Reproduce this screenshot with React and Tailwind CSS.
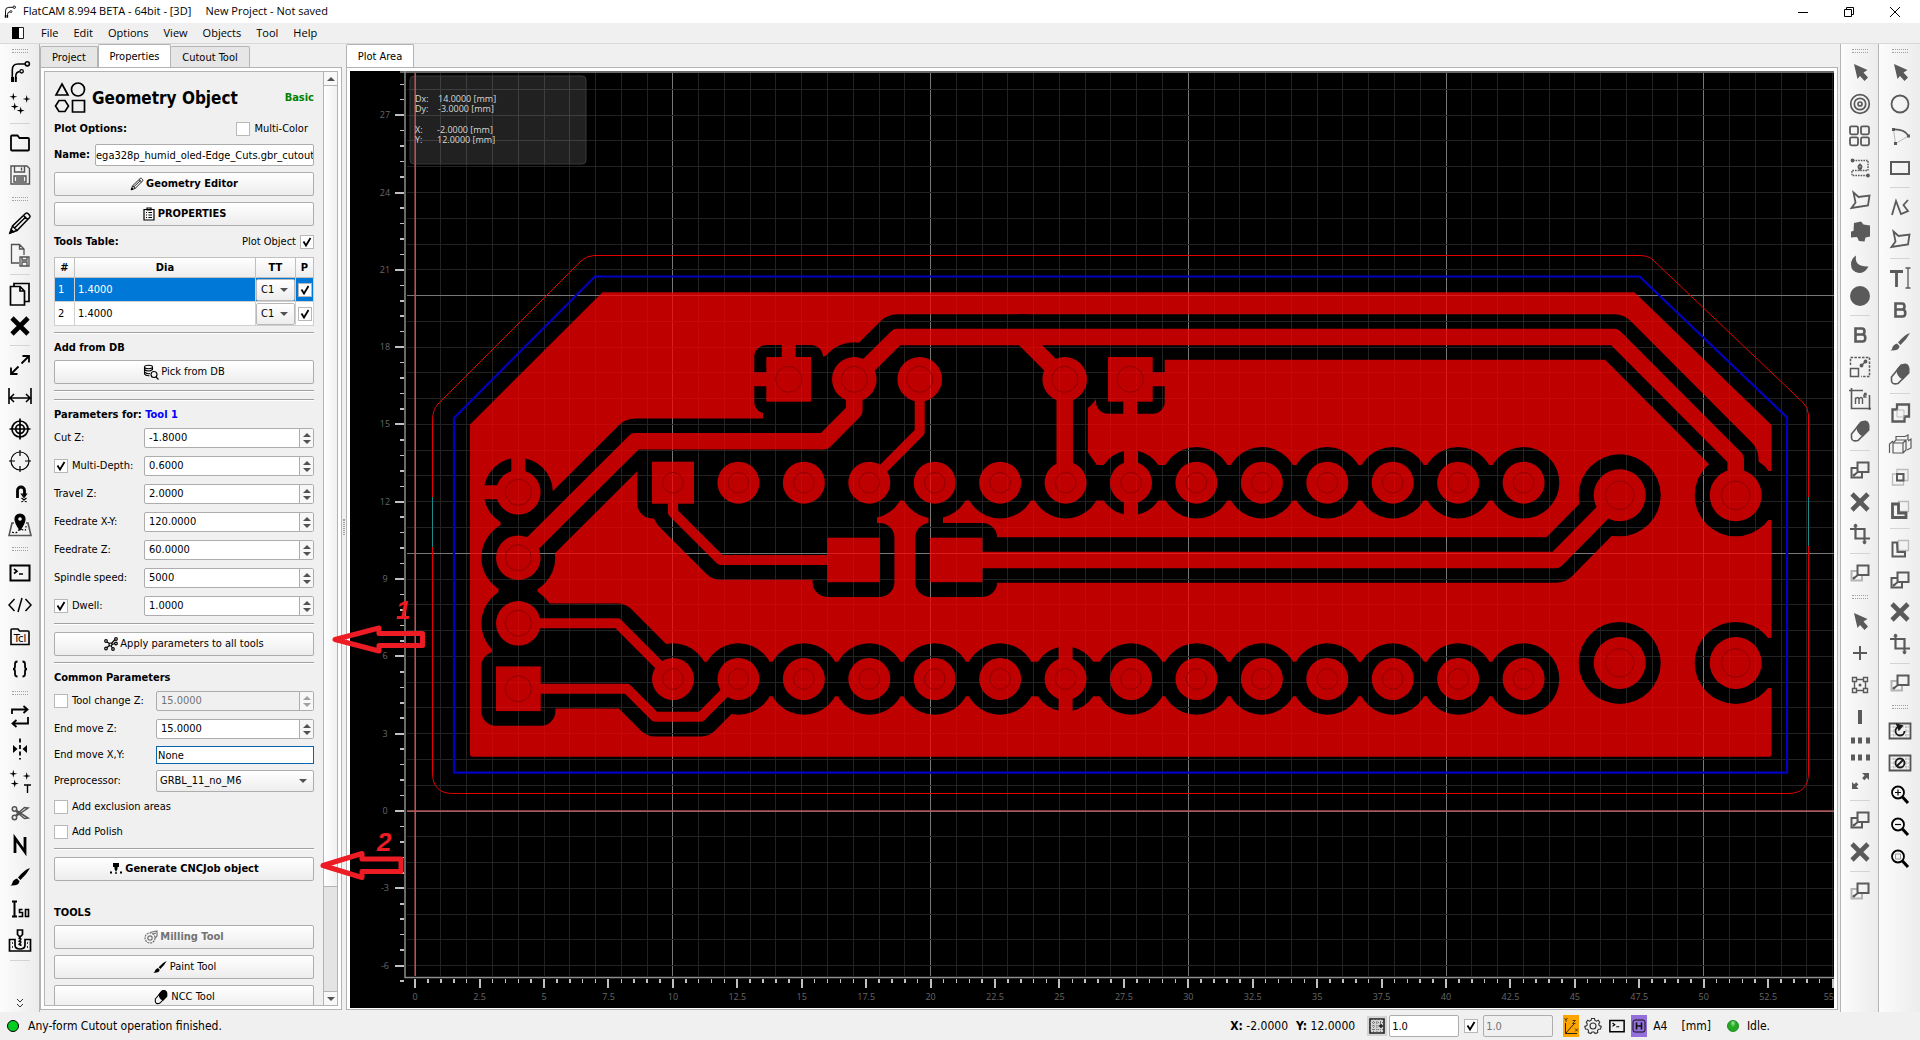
import clsx from 'clsx';

const PANEL_FONT = "font-['DejaVu_Sans_Condensed','DejaVu_Sans',sans-serif]";
const UI_FONT = "font-['Open_Sans','Noto_Sans',sans-serif]";

/* ---------- icons ---------- */

function Svg({ children, className = 'size-6', box = '0 0 24 24', ...rest }) {
  return (
    <svg viewBox={box} className={className} fill="none" stroke="currentColor" strokeWidth="1.6" aria-hidden="true" {...rest}>
      {children}
    </svg>
  );
}

const star = (x, y) => `M${x} ${y - 4}l.8 3.2 3.2.8-3.2.8-.8 3.2-.8-3.2-3.2-.8 3.2-.8z`;

const FlatcamIcon = ({ className }) => (
  <Svg className={className}>
    <path d="M4.3 18V10Q4.3 4 10 4h7M7.8 19v-3q0-4 4-4.5" />
    <circle cx="19.3" cy="3.8" r="2.1" />
    <circle cx="13.6" cy="11.3" r="1.7" strokeWidth="1.3" />
    <path d="M3 17h3v5H3zM6.8 17h2v5h-2z" fill="currentColor" stroke="none" />
  </Svg>
);
const Sparkles = ({ letter }) => (
  <Svg>
    <path d={star(5.3, 4.8) + star(18.7, 7) + star(6.7, 14.6) + (letter ? '' : star(12.7, 18.6))} fill="currentColor" stroke="none" />
    {letter && <path d="M16 16h7M19.5 16v8" strokeWidth="1.4" />}
  </Svg>
);
const FolderIcon = () => (
  <Svg strokeWidth="1.8">
    <path d="M3 19V5.5Q3 4.5 4 4.5h5.5L11.5 7H20q1 0 1 1v10.5q0 1-1 1H4q-1 0-1-1z" />
  </Svg>
);
const SaveIcon = () => (
  <Svg className="size-6 text-neutral-600" strokeWidth="1.4">
    <path d="M3 3h16l2.5 2.5V21H3zM6.5 3v6h10V3M13.5 4.5v3" />
    <path d="M6 13h12v6H6zM8 15h8M8 17h8" />
  </Svg>
);
const PencilIcon = ({ className }) => (
  <Svg className={className} strokeWidth="1.5">
    <path d="M2 22l2.5-7L17.5 2.5q1.2-1 2.4 0l1.7 1.7q1 1.2 0 2.4L9 19.5zM4.5 15L9 19.5M15.5 4.5L19.5 8.5M6.5 17L18 5.8" />
    <path d="M2 22l1.2-3.4 2.2 2.2z" fill="currentColor" />
  </Svg>
);
const DocSaveIcon = () => (
  <Svg className="size-6 text-neutral-600" strokeWidth="1.3">
    <path d="M11 20H3.5V1.5h8L16 6v6M11.5 1.5V6H16" />
    <path d="M12 14h9v9h-9zM14 14v3h5v-3M14 23v-4h5v4" />
  </Svg>
);
const CopyIcon = () => (
  <Svg strokeWidth="1.7">
    <path d="M2.5 4.5h9.5l4.5 4.5v14h-14zM12 4.5V9h4.5" />
    <path d="M6 4V1.5h15v18h-4" />
  </Svg>
);
const CrossIcon = () => (
  <Svg>
    <path d="M4 4l16 16M20 4L4 20" strokeWidth="4.6" />
  </Svg>
);
const ExpandIcon = ({ solid }) => (
  <Svg strokeWidth="1.8">
    {solid ? (
      <path d="M14 4h7v7l-2.2-2.2-2.5 2.5-2.2-2.2 2.5-2.5zM4 20v-7l2.2 2.2 2-2 2.2 2.2-2 2 2.2 2.6z" fill="currentColor" stroke="none" />
    ) : (
      <path d="M13.5 10.5l7-7M14.5 3h6.5v6.5M10.5 13.5l-7 7M3 14.5V21h6.5" />
    )}
  </Svg>
);
const DistanceIcon = () => (
  <Svg>
    <path d="M1 3v16M23 3v16M2 13h20M6 9l-4 4 4 4M18 9l4 4-4 4" />
  </Svg>
);
const TargetIcon = () => (
  <Svg strokeWidth="1.7">
    <circle cx="12" cy="12" r="8" />
    <circle cx="12" cy="12" r="4.3" />
    <path d="M12 1.5v21M1.5 12h21" />
  </Svg>
);
const CrosshairIcon = () => (
  <Svg strokeWidth="1.2">
    <circle cx="12" cy="12" r="9" />
    <path d="M12 1v6M12 17v6M1 12h6M17 12h6" />
  </Svg>
);
const SnapIcon = () => (
  <Svg>
    <path d="M9.5 17V9.500a3.5 3.5 0 0 1 7 0V15" strokeWidth="2.8" />
    <path d="M13.5 13h5l-2.5 3.5zM13.5 21l5-4M13.5 17l5 4" strokeWidth="1.2" />
  </Svg>
);
const MapIcon = () => (
  <Svg strokeWidth="1.2">
    <path d="M6 10H4L1 22.500h22L20 10h-2" stroke="#555" strokeWidth="1.6" />
    <path d="M4 19q4 2 6-1t5-1 3-4" strokeDasharray="2 1.5" />
    <path d="M12 17Q7 10 7 6a5 5 0 0 1 10 0q0 4-5 11z" fill="currentColor" />
    <circle cx="12" cy="6" r="1.8" fill="#f5f5f5" stroke="none" />
  </Svg>
);
const TerminalIcon = ({ className }) => (
  <Svg className={className} strokeWidth="2">
    <path d="M2.5 4.5h19v15h-19z" />
    <path d="M6 8l3 2.2L6 12.5M11 13h4" strokeWidth="1.6" />
  </Svg>
);
const CodeIcon = () => (
  <Svg strokeWidth="1.5">
    <path d="M6.5 6L1 12l5.5 6M17.5 6l5.5 6-5.5 6M14 5l-4 14" />
  </Svg>
);
const TclIcon = () => (
  <Svg strokeWidth="1.6">
    <path d="M3 19.5V5q0-1 1-1h6l1.5 2H20q1 0 1 1v12.5z" />
    <text x="12" y="16.5" textAnchor="middle" fontSize="10" fontFamily="DejaVu Sans, sans-serif" fill="currentColor" stroke="none">Tcl</text>
  </Svg>
);
const BracesIcon = () => (
  <Svg strokeWidth="1.8">
    <path d="M9.5 4.5Q7 4.5 7 7v2.5Q7 12 5 12q2 0 2 2.5V17q0 2.5 2.5 2.5M14.5 4.5Q17 4.5 17 7v2.5q0 2.5 2 2.5-2 0-2 2.5V17q0 2.5-2.5 2.5" />
  </Svg>
);
const LoopIcon = () => (
  <Svg strokeWidth="1.8">
    <path d="M4 9V4.5h15M15.5 1l4 3.5-4 3.5M20 12v6.5H5M8.5 15l-4 3.5 4 3.5" />
  </Svg>
);
const MirrorIcon = () => (
  <Svg>
    <path d="M12 1.5v21" strokeDasharray="4 2.5" strokeWidth="1.8" />
    <path d="M5 8v8l4.5-4zM19 8v8l-4.5-4z" fill="currentColor" stroke="none" />
  </Svg>
);
const ScissorsIcon = () => (
  <Svg className="size-6 text-neutral-600" strokeWidth="1.5">
    <circle cx="6.5" cy="8" r="2.2" />
    <circle cx="6.5" cy="16.5" r="2.2" />
    <path d="M8.5 9.5L20 17l-3.5.5L8 10.5M8.5 15L20 7l-3.5-.5L8 14" />
  </Svg>
);
const NIcon = () => (
  <Svg>
    <path d="M7 20V5l10 14V4" strokeWidth="2.8" />
  </Svg>
);
const BrushIcon = ({ className }) => (
  <Svg className={className}>
    <path d="M22 3q-6 2-12 9.5l2.5 2.5Q19 9 22 3zM9 13.5l2.5 2.5q0 5-9.5 4.5 2-.5 2.5-3T9 13.5z" fill="currentColor" stroke="none" />
  </Svg>
);
const IsoIcon = () => (
  <Svg>
    <path d="M4 4.5h5M6.5 4.5v15M4 19.5h5" strokeWidth="2" />
    <path d="M14.5 12.5h-3v3h3v4h-4M17.5 12.500h3v7h-3z" strokeWidth="1.6" />
  </Svg>
);
const DrillIcon = () => (
  <Svg strokeWidth="1.7">
    <path d="M1.5 10.5H7V16q0 4 5 4t5-4v-5.5h5.5V22h-21z" />
    <path d="M9.5 1h5v4.5L12 8 9.5 5.5zM12 7v10M10.5 9l3 1.5M10.5 12l3 1.5M10.5 15l3 1.5" />
    <path d="M4 14h1M4 18h1M19 14h1M19 18h1" />
  </Svg>
);

const ArrowIcon = () => (
  <Svg>
    <path d="M6 4l13.5 6-4 2.5 4.5 5-3.5 3.5-4.5-5L9.5 19z" fill="currentColor" stroke="none" />
  </Svg>
);
const ApertureIcon = () => (
  <Svg strokeWidth="1.7">
    <circle cx="12" cy="12" r="9.3" />
    <circle cx="12" cy="12" r="5.7" />
    <circle cx="12" cy="12" r="2" />
  </Svg>
);
const FourSquares = () => (
  <Svg strokeWidth="1.8">
    <rect x="2" y="2.3" width="8" height="8" rx="1.5" />
    <rect x="13" y="2.3" width="8" height="8" rx="1.5" />
    <rect x="2" y="13.3" width="8" height="8" rx="1.5" />
    <rect x="13" y="13.3" width="8" height="8" rx="1.5" />
  </Svg>
);
const TrackIcon = () => (
  <Svg strokeWidth="1.4">
    <path d="M5 4.5h15v10H4v5h16" strokeDasharray="1.6 1" />
    <circle cx="4.5" cy="4.5" r="1.2" fill="currentColor" />
    <circle cx="20" cy="19.5" r="1.2" fill="currentColor" />
    <path d="M12 13.5q-3-3 0-5 3 2 0 5z" strokeWidth="2" />
  </Svg>
);
const PolyIcon = () => (
  <Svg strokeWidth="1.8">
    <path d="M5.5 4.5l5 4.5 11-1.5-1.5 10L3.5 20l4-5.5z" />
  </Svg>
);
const BlobIcon = () => (
  <Svg>
    <path d="M6 3l7-1.5 2.5 3 6.5 1v11l-4.5 1-1 4-5.5-.5-2-4-6 .5v-6L5.500 11z" fill="currentColor" stroke="none" />
  </Svg>
);
const MoonIcon = () => (
  <Svg>
    <path d="M8 3.5Q6 15 20.5 14.5 17 21.500 11 21 3 20 3 12.5q0-6 5-9z" fill="currentColor" stroke="none" />
  </Svg>
);
const DiscIcon = () => (
  <Svg>
    <circle cx="12" cy="12" r="10" fill="currentColor" stroke="none" />
  </Svg>
);
const BoldIcon = () => (
  <Svg strokeWidth="2.6">
    <path d="M7.5 5.5H14q2.5 0 2.5 3t-2.5 3H7.5zM7.5 11.5h7q2.8 0 2.8 3.5t-2.8 3.5h-7z" />
  </Svg>
);
const ScaleIcon = () => (
  <Svg strokeWidth="1.5">
    <path d="M2.5 10V2.5h19v19H13" strokeDasharray="2.5 1.3" />
    <path d="M2.5 13.5h8v8h-8zM13 11l5-5" />
    <circle cx="13.5" cy="10.5" r="1.2" fill="currentColor" />
    <circle cx="17.5" cy="6.5" r="1.2" fill="currentColor" />
  </Svg>
);
const AreaIcon = () => (
  <Svg strokeWidth="1.6">
    <path d="M3.5 1v20.5H23M1 3.5h14M21.5 8v15" />
    <path d="M7.5 17v-6.5M7.5 12q2.5-3 3.5 0v5M11 12q2.5-3 3.5 0v5M16 6.5h2v1.5h-2v2h2.5" strokeWidth="1.4" />
  </Svg>
);
const EraserIcon = ({ className }) => (
  <Svg className={className} strokeWidth="1.6">
    <path d="M3.5 15L13 3.5q6-3 7.5 2.5v5L10 21.5Q4 23 3.5 19z" />
    <path d="M9.5 7.5L13 3.5q6-3 7.5 2.5v5L15 16.5Q9 14 9.5 7.5z" fill="currentColor" />
  </Svg>
);
const MoveCopyIcon = ({ faded }) => (
  <Svg strokeWidth="2">
    <path d="M9 10H3.5v9.5H14V15" stroke={faded ? '#b5b5b5' : 'currentColor'} />
    <path d="M9.5 4.5h11V14h-11zM5 18l6-5" />
    <circle cx="6" cy="17" r="1.3" fill="currentColor" stroke="none" />
  </Svg>
);
const CropIcon = () => (
  <Svg strokeWidth="2.2">
    <path d="M7.5 2v14.5H22M2 7h14.5v15" />
    <path d="M5 4.5L7.5 1.5 10 4.5zM14 19.5l2.5 3 2.5-3z" fill="currentColor" stroke="none" />
  </Svg>
);
const PlusIcon = () => (
  <Svg strokeWidth="2">
    <path d="M12 5v14M5 12h14" />
  </Svg>
);
const NodesIcon = () => (
  <Svg strokeWidth="1.4">
    <path d="M8 6.5h8M8 17.5h8M6.5 8v8M17.5 8v8" />
    <path d="M4.500 4.5h4v4h-4zM15.5 4.5h4v4h-4zM4.5 15.5h4v4h-4zM15.5 15.5h4v4h-4z" fill="#f5f5f5" />
    <circle cx="12" cy="12" r="1.5" fill="currentColor" stroke="none" />
  </Svg>
);
const BarIcon = () => (
  <Svg>
    <path d="M12 5v14" strokeWidth="4" />
  </Svg>
);
const BarRows = () => (
  <Svg>
    <path d="M5 .5v6M12 .5v6M20 .5v6M5 17.500v6M12 17.5v6M20 17.5v6" strokeWidth="4" />
  </Svg>
);

const CircleIcon = () => (
  <Svg strokeWidth="1.8">
    <circle cx="12" cy="12" r="8.5" />
  </Svg>
);
const ArcIcon = () => (
  <Svg strokeWidth="1.7">
    <path d="M5.5 5.5q11-.5 15 6.5" />
    <path d="M5.5 5.5l2 14 13-7.5" strokeWidth="1" stroke="#bbb" />
    <path d="M4 4h3v3H4zM19 10.5h3v3h-3zM6 18h3v3H6z" fill="currentColor" stroke="none" />
  </Svg>
);
const RectIcon = () => (
  <Svg strokeWidth="2">
    <path d="M3 6h18v12H3z" />
  </Svg>
);
const PathIcon = () => (
  <Svg strokeWidth="1.8">
    <path d="M4 20L8 6l5 13 7-3-4.5-6L20 5" />
  </Svg>
);
const TextIcon = () => (
  <Svg strokeWidth="2.4">
    <path d="M2 5.5h13M8.5 5v16" strokeWidth="2.8" />
    <path d="M20 2v20M17.5 2h5M17.5 22h5" strokeWidth="1.3" />
  </Svg>
);
const UnionIcon = () => (
  <Svg strokeWidth="2.3">
    <path d="M9 3.5h12v12h-4.5v5h-12v-12H9z" />
    <path d="M9 9h7v7H9z" strokeWidth="1" stroke="#bbb" />
  </Svg>
);
const CubesIcon = () => (
  <Svg strokeWidth="1.2">
    <path d="M5 10h10v10H5zM5 10l3-3h10l-3 3M18 7v10l-3 3M8 7V3.5h9L20 2v5M1.5 20v-9L5 8M20 8l3-2v9l-4 2" />
  </Svg>
);
const IntersectIcon = () => (
  <Svg strokeWidth="2">
    <path d="M9 4.5h11v11H9zM4.5 9h11v11h-11z" strokeWidth="1.3" stroke="#bbb" />
    <path d="M9 9h6.5v6.5H9z" />
  </Svg>
);
const SubtractIcon = ({ thin }) => (
  <Svg strokeWidth={thin ? 2 : 2.8}>
    <path d="M10.5 4.5h10v10h-10z" strokeWidth="1.3" stroke="#bbb" />
    <path d={thin ? 'M9 6.5H4.5v14h12.5V16h-7.5z' : 'M9 7H4.500v13.5H18V16H10.500V7z'} fill="none" />
  </Svg>
);
const ReplotIcon = ({ clear }) => (
  <Svg className="size-6 text-neutral-900" strokeWidth="1.8">
    <path d="M1.5 4.5h21v15h-21z" stroke="#555" />
    <path d="M2 8h20M2 12h20M2 16h20M6 5v14M18 5v14M10 5v14M14 5v14" strokeWidth="1" stroke="#aaa" strokeDasharray="1.5 1" />
    <circle cx="12" cy="12" r="4.5" fill="#eee" strokeDasharray={clear ? undefined : '21 7'} />
    <path d={clear ? 'M9 15l6-6' : 'M9 5.5l5 1.5-3 3.5z'} fill="currentColor" />
  </Svg>
);
const ZoomIcon = ({ mode }) => (
  <Svg className="size-6 text-black">
    <circle cx="10" cy="9.5" r="6" strokeWidth="1.8" />
    <path d="M14.5 14l5.5 6" strokeWidth="3" />
    {mode === 'in' && <path d="M10 6.5v6M7 9.5h6" strokeWidth="1.2" />}
    {mode === 'out' && <path d="M7 9.5h6" strokeWidth="1.2" />}
    {mode === 'fit' && <path d="M7.5 7h5v5h-5z" strokeWidth="1" stroke="#999" />}
  </Svg>
);

/* ---------- toolbars ---------- */

const Grip = () => <div className="mx-auto my-1.5 h-1 w-4 shrink-0 border-y border-dotted border-neutral-400" />;
const Sep = () => <div className="mx-auto my-[3px] h-px w-5 shrink-0 bg-neutral-300" />;

const leftTools = [
  ['FlatCAM', <FlatcamIcon />], ['New Excellon', <Sparkles />], '-',
  ['Open', <FolderIcon />], ['Save', <SaveIcon />], '=',
  ['Editor', <PencilIcon />], ['Save object', <DocSaveIcon />], '-',
  ['Copy', <CopyIcon />], ['Delete', <CrossIcon />], '-',
  ['Fit', <ExpandIcon />], ['Distance', <DistanceIcon />], ['Set origin', <TargetIcon />],
  ['Move to origin', <CrosshairIcon />], ['Snap', <SnapIcon />], ['Locate', <MapIcon />], '=',
  ['Shell', <TerminalIcon />], ['New script', <CodeIcon />], ['Open script', <TclIcon />], ['Run script', <BracesIcon />], '=',
  ['Two sided', <LoopIcon />], ['Align', <MirrorIcon />], ['Extract drills', <Sparkles letter />], ['Cutout', <ScissorsIcon />],
  ['NCC', <NIcon />], ['Paint', <BrushIcon />], ['Isolation', <IsoIcon />], ['Drilling', <DrillIcon />], '-',
];

const editTools = [
  ['Select', <ArrowIcon />], ['Aperture', <ApertureIcon />], ['Array', <FourSquares />], ['Track', <TrackIcon />],
  ['Region', <PolyIcon />], ['Poligonize', <BlobIcon />], ['Semidisc', <MoonIcon />], ['Disc', <DiscIcon />], '-',
  ['Buffer', <BoldIcon />], ['Scale', <ScaleIcon />], ['Area', <AreaIcon />], ['Eraser', <EraserIcon />], '-',
  ['Copy', <MoveCopyIcon />], ['Delete', <CrossIcon />], ['Transform', <CropIcon />], '-',
  ['Move', <MoveCopyIcon faded />], '=',
  ['Select drill', <ArrowIcon />], ['Add drill', <PlusIcon />], ['Drill array', <NodesIcon />], ['Add slot', <BarIcon />],
  ['Slot array', <BarRows />], ['Resize', <ExpandIcon solid />], '-',
  ['Copy drill', <MoveCopyIcon />], ['Delete drill', <CrossIcon />], '-', ['Move drill', <MoveCopyIcon faded />],
];
const geoTools = [
  ['Select shape', <ArrowIcon />], ['Circle', <CircleIcon />], ['Arc', <ArcIcon />], ['Rectangle', <RectIcon />], '-',
  ['Path', <PathIcon />], ['Polygon', <PolyIcon />], '-',
  ['Text', <TextIcon />], ['Buffer shape', <BoldIcon />], ['Paint shape', <BrushIcon />], ['Erase shape', <EraserIcon />], '-',
  ['Union', <UnionIcon />], ['Explode', <CubesIcon />], ['Intersection', <IntersectIcon />], ['Subtraction', <SubtractIcon />], '-',
  ['Cut path', <SubtractIcon thin />], ['Copy shape', <MoveCopyIcon />], ['Delete shape', <CrossIcon />], ['Transform shape', <CropIcon />], '-',
  ['Move shape', <MoveCopyIcon faded />], '=',
  ['Replot', <ReplotIcon />], ['Clear plot', <ReplotIcon clear />], ['Zoom in', <ZoomIcon mode="in" />],
  ['Zoom out', <ZoomIcon mode="out" />], ['Zoom fit', <ZoomIcon mode="fit" />],
];

function Toolbar({ items, children, className }) {
  return (
    <div className={clsx('flex shrink-0 flex-col overflow-hidden border-r border-[#b4b4b4] bg-linear-to-r from-[#fcfcfc] to-[#ececec]', className)}>
      <div className="mx-auto mt-[5px] mb-[3px] h-1 w-4 shrink-0 border-y border-dotted border-neutral-400" />
      {items.map((it, i) => {
        if (it === '-') return <Sep key={i} />;
        if (it === '=') return <Grip key={i} />;
        return (
          <button key={i} type="button" aria-label={it[0]} className="flex h-8 w-full shrink-0 items-center justify-center">
            {it[1]}
          </button>
        );
      })}
      {children}
    </div>
  );
}

/* ---------- form controls ---------- */

const BTN = 'flex h-6 w-full shrink-0 items-center justify-center gap-0.5 rounded-xs border border-[#adadad] bg-linear-to-b from-white to-[#ededed]';

function Check({ id, checked, label }) {
  return (
    <span className="grid size-3.5 shrink-0 place-items-center">
      <input id={id} type="checkbox" aria-label={label} defaultChecked={checked} className="peer col-start-1 row-start-1 size-3.5 appearance-none border border-[#b8b8b8] bg-white" />
      <svg viewBox="0 0 14 14" className="pointer-events-none col-start-1 row-start-1 hidden size-3.5 peer-checked:block" fill="none" stroke="#000" strokeWidth="1.8">
        <path d="M3.5 6.5L6 10.5L10.5 3" />
      </svg>
    </span>
  );
}

const Caret = ({ className, up }) => (
  <svg viewBox="0 0 8 4" className={clsx('pointer-events-none h-1 w-2', className)} fill="currentColor" aria-hidden="true">
    <path d={up ? 'M0 4L4 0l4 4z' : 'M0 0l4 4 4-4z'} />
  </svg>
);

function Spin({ id, value, label, disabled }) {
  return (
    <div className={clsx('flex h-5 min-w-0 flex-1 rounded-xs border border-[#adadad]', disabled ? 'bg-[#f0f0f0] text-neutral-500' : 'bg-white')}>
      <input id={id} aria-label={label} defaultValue={value} disabled={disabled} className="min-w-0 flex-1 bg-transparent px-1" />
      <div className={clsx('flex w-3.5 flex-col items-center justify-center gap-[3px] border-l border-[#adadad] bg-[#f7f7f7]', disabled ? 'text-neutral-400' : 'text-neutral-600')}>
        <Caret up />
        <Caret />
      </div>
    </div>
  );
}

function Field({ id, label, value, check, checked, disabled, wide }) {
  return (
    <div className="flex h-5 shrink-0 items-center">
      <div className={clsx('flex shrink-0 items-center gap-1', wide ? 'w-[102px]' : 'w-[90px]')}>
        {check && <Check id={`${id}-on`} checked={checked} />}
        <label htmlFor={check ? `${id}-on` : id} className="whitespace-nowrap">{label}</label>
      </div>
      <Spin id={id} value={value} label={label} disabled={disabled} />
    </div>
  );
}

const Rule = ({ className }) => <hr className={clsx('h-0.5 shrink-0 border-t border-b border-t-[#a0a0a0] border-b-white', className)} />;
const Heading = ({ children, className = 'mt-[5px]' }) => <h2 className={clsx('h-4.5 shrink-0 leading-4.5 font-bold', className)}>{children}</h2>;

const cutFields = [
  { id: 'cutz', label: 'Cut Z:', value: '-1.8000' },
  { id: 'mdepth', label: 'Multi-Depth:', value: '0.6000', check: true, checked: true },
  { id: 'travelz', label: 'Travel Z:', value: '2.0000' },
  { id: 'frxy', label: 'Feedrate X-Y:', value: '120.0000' },
  { id: 'frz', label: 'Feedrate Z:', value: '60.0000' },
  { id: 'spindle', label: 'Spindle speed:', value: '5000' },
  { id: 'dwell', label: 'Dwell:', value: '1.0000', check: true, checked: true },
];

function ToolsTable() {
  return (
    <table className="mt-[5px] w-full shrink-0 table-fixed border-collapse border border-[#b4b4b4] bg-white text-left">
      <colgroup>
        <col className="w-5" />
        <col />
        <col className="w-10" />
        <col className="w-[18px]" />
      </colgroup>
      <thead>
        <tr className="h-5 bg-linear-to-b from-white to-[#ececec] text-center">
          {['#', 'Dia', 'TT', 'P'].map((h) => (
            <th key={h} className="border border-[#c0c0c0] p-0 font-bold">{h}</th>
          ))}
        </tr>
      </thead>
      <tbody>
        {[1, 2].map((n) => (
          <tr key={n} className={clsx('h-6', n === 1 && 'bg-[#0078d7] text-white')}>
            <td className="border border-[#d0d0d0] p-0 pl-[3px]">{n}</td>
            <td className="border border-[#d0d0d0] p-0 pl-[3px]">1.4000</td>
            <td className="border border-[#d0d0d0] p-0">
              <div className="grid h-[22px] items-center rounded-xs border border-[#b8b8b8] bg-linear-to-b from-white to-[#ededed] text-black">
                <select aria-label={`Tool ${n} type`} className="col-start-1 row-start-1 w-full appearance-none bg-transparent pl-1">
                  <option>C1</option>
                </select>
                <Caret className="col-start-1 row-start-1 mr-1.5 justify-self-end text-neutral-600" />
              </div>
            </td>
            <td className="border border-[#d0d0d0] p-0">
              <div className="flex justify-center"><Check id={`plot-${n}`} label={`Plot tool ${n}`} checked /></div>
            </td>
          </tr>
        ))}
      </tbody>
    </table>
  );
}

function GeometryForm() {
  return (
    <form className="flex min-w-0 flex-1 flex-col overflow-hidden px-[9px] pt-2.5">
      <div className="flex h-8 shrink-0 items-center">
        <Svg className="size-8" box="0 0 32 32" strokeWidth="1.7">
          <path d="M8 2L14 13H2zM5 18.5h6l3.5 5.5-3.5 5.5H5L1.5 24zM18.5 18.5h12v11.5h-12z" />
          <circle cx="24" cy="7.5" r="6.5" />
        </Svg>
        <h1 className="ml-1.5 flex-1 text-[17px] font-bold">Geometry Object</h1>
        <span className="font-bold text-[#008000]">Basic</span>
      </div>
      <div className="mt-[5px] flex h-5 shrink-0 items-center">
        <b className="flex-1">Plot Options:</b>
        <Check id="multicolor" />
        <label htmlFor="multicolor" className="mr-1.5 ml-1">Multi-Color</label>
      </div>
      <div className="mt-[5px] flex h-[22px] shrink-0 items-center">
        <label htmlFor="name" className="w-[41px] font-bold">Name:</label>
        <input id="name" defaultValue="ega328p_humid_oled-Edge_Cuts.gbr_cutout" className="h-[22px] min-w-0 flex-1 rounded-xs border border-[#adadad] bg-white text-right" />
      </div>
      <button type="button" className={clsx(BTN, 'mt-1.5 font-bold')}>
        <PencilIcon className="size-3.5" />
        Geometry Editor
      </button>
      <button type="button" className={clsx(BTN, 'mt-1.5 font-bold')}>
        <Svg className="size-3.5" box="0 0 14 14" strokeWidth="1.2">
          <path d="M2 2.5h10v10.5H2zM5 1h4v2H5zM4 5.5h1M4 8h1M4 10.5h1M6.5 5.5H10M6.5 8H10M6.5 10.5H10" />
        </Svg>
        PROPERTIES
      </button>
      <div className="mt-1.5 flex h-5 shrink-0 items-center">
        <b className="flex-1">Tools Table:</b>
        <label htmlFor="plotobj" className="mr-1">Plot Object</label>
        <Check id="plotobj" checked />
      </div>
      <ToolsTable />
      <Rule className="mt-1.5" />
      <Heading>Add from DB</Heading>
      <button type="button" className={clsx(BTN, 'mt-[3px]')}>
        <Svg className="size-4" box="0 0 16 16" strokeWidth="1.1">
          <ellipse cx="5.5" cy="3" rx="4" ry="1.7" />
          <path d="M1.5 3v7q1 2 5 1.7M9.5 3v3M1.5 5.5q4 3 8 0M1.5 8q3 2.5 5.5 1.5M13 13l2.5 2.5" />
          <circle cx="11" cy="10.5" r="3" />
        </Svg>
        Pick from DB
      </button>
      <Rule className="mt-1.5" />
      <Rule className="mt-[7px]" />
      <Heading>
        Parameters for: <span className="text-[#0000ff]">Tool 1</span>
      </Heading>
      <div className="mt-1 flex shrink-0 flex-col gap-2">
        {cutFields.map((f) => (
          <Field key={f.id} {...f} />
        ))}
      </div>
      <Rule className="mt-[7px]" />
      <button type="button" className={clsx(BTN, 'mt-[7px]')}>
        <Svg className="size-3.5" box="0 0 14 14" strokeWidth="1.2">
          <circle cx="2" cy="4" r="1.3" />
          <circle cx="2" cy="11.5" r="1.3" />
          <circle cx="6.5" cy="7.5" r="1.5" />
          <circle cx="12" cy="2" r="1.3" />
          <circle cx="12" cy="6.5" r="1.3" />
          <circle cx="9" cy="12" r="1.3" />
          <path d="M3 5l2.5 1.5M3 10.5l2.5-2M7.5 6.5l3.5-4M8 7.5l3-1M7 9l1.5 2" />
        </Svg>
        Apply parameters to all tools
      </button>
      <Rule className="mt-1.5" />
      <Heading>Common Parameters</Heading>
      <div className="mt-1 flex shrink-0 flex-col gap-2">
        <Field id="toolz" label="Tool change Z:" value="15.0000" check disabled wide />
        <Field id="endz" label="End move Z:" value="15.0000" wide />
      </div>
      <div className="mt-[7px] flex h-4.5 shrink-0 items-center">
        <label htmlFor="endxy" className="w-[102px] shrink-0">End move X,Y:</label>
        <input id="endxy" defaultValue="None" className="h-4.5 min-w-0 flex-1 border border-[#0a64ad] bg-white px-px" />
      </div>
      <div className="mt-1.5 flex h-[22px] shrink-0 items-center">
        <label htmlFor="preproc" className="w-[102px] shrink-0">Preprocessor:</label>
        <div className="grid h-[22px] flex-1 items-center rounded-xs border border-[#adadad] bg-linear-to-b from-white to-[#ededed]">
          <select id="preproc" className="col-start-1 row-start-1 w-full appearance-none bg-transparent pl-[3px]">
            <option>GRBL_11_no_M6</option>
          </select>
          <Caret className="col-start-1 row-start-1 mr-1.5 justify-self-end text-neutral-600" />
        </div>
      </div>
      <div className="mt-1.5 flex h-4.5 shrink-0 items-center gap-1">
        <Check id="excl" />
        <label htmlFor="excl">Add exclusion areas</label>
      </div>
      <div className="mt-[7px] flex h-4.5 shrink-0 items-center gap-1">
        <Check id="polish" />
        <label htmlFor="polish">Add Polish</label>
      </div>
      <Rule className="mt-[7px]" />
      <button type="button" className={clsx(BTN, 'mt-[7px] font-bold')}>
        <Svg className="size-3.5" box="0 0 14 14">
          <path d="M4 1h6v4H8.500v2L7 10 5.500 7V5H4zM1 9.500h2v2H1zM11 9.500h2v2h-2zM6.300 10h1.400v2H6.300z" fill="currentColor" stroke="none" />
        </Svg>
        Generate CNCJob object
      </button>
      <Heading className="mt-[23px]">TOOLS</Heading>
      <button type="button" disabled className={clsx(BTN, 'mt-[3px] font-bold text-neutral-500')}>
        <Svg className="size-3.5" box="0 0 14 14" strokeWidth="1.2">
          <circle cx="6" cy="8" r="5" strokeDasharray="2 .8" />
          <circle cx="6" cy="8" r="2.2" />
          <path d="M6 2.500L13 1v5l-2 2M9 4l3-1" />
        </Svg>
        Milling Tool
      </button>
      <button type="button" className={clsx(BTN, 'mt-1.5')}>
        <BrushIcon className="size-4" />
        Paint Tool
      </button>
      <button type="button" className={clsx(BTN, 'mt-1.5')}>
        <EraserIcon className="size-4" />
        NCC Tool
      </button>
    </form>
  );
}

function SidePanel() {
  return (
    <div className={clsx('flex w-[302px] shrink-0 flex-col text-[11px] leading-4', PANEL_FONT)}>
      <div className="flex h-[23px] shrink-0 items-end">
        <button type="button" className="h-[21px] w-[58px] rounded-t-xs border border-b-0 border-[#b4b4b4] bg-[#e6e6e6] pt-0.5">Project</button>
        <button type="button" className="h-[23px] w-[73px] rounded-t-xs border border-b-0 border-[#b4b4b4] bg-white pt-0.5">Properties</button>
        <button type="button" className="h-[21px] w-[79px] rounded-t-xs border border-b-0 border-l-0 border-[#b4b4b4] bg-[#e6e6e6] pt-0.5">Cutout Tool</button>
      </div>
      <div className="flex min-h-0 flex-1 border border-[#b4b4b4] bg-white p-[3px]">
        <div className="flex min-w-0 flex-1 border border-[#b4b4b4] bg-[#f0f0f0]">
          <GeometryForm />
          <div className="flex w-3.5 shrink-0 flex-col border-l border-[#b4b4b4] bg-[#e4e4e4] text-neutral-600">
            <button type="button" aria-label="Scroll up" className="grid h-3.5 place-items-center border-b border-[#b4b4b4] bg-[#f8f8f8]">
              <Caret up />
            </button>
            <div className="flex-[800] border-b border-[#b4b4b4] bg-linear-to-r from-white to-[#f0f0f0]" />
            <div className="flex-[104]" />
            <button type="button" aria-label="Scroll down" className="grid h-3.5 place-items-center border-t border-[#b4b4b4] bg-[#f8f8f8]">
              <Caret />
            </button>
          </div>
        </div>
      </div>
    </div>
  );
}

/* ---------- plot canvas ---------- */

const MM = 25.77;
const px = (mm) => 415.2 + mm * MM;
const py = (mm) => 811 - mm * MM;
const range = (from, to, step) => Array.from({ length: Math.round((to - from) / step) + 1 }, (_, i) => from + i * step);

const rowPads = range(0, 13, 1).map((i) => 673 + i * 65.43);
const MID = 482.7;
const LOW = 679;

const thick = [
  'M518.3 557.7L635 441.3H824.3L854.3 411V379.3L897 337H1614.5L1735.7 458.6V495.3',
  'M1022.4 337L1064.7 379.3V482.7',
  'M956 560H1556L1619.7 495.3',
];
const thin = [
  'M919.7 379.3V432L869.2 482.7',
  'M673 482.7V512.5L720.5 560H853',
  'M518.3 623.3H617.5L673 679',
  'M518.3 688.7H627L655 716.7H701L738.3 679',
];
// [x, y, pad radius, clearance radius]
const discs = [
  [518.3, 492.3, 22.3, 34.6],
  [518.3, 557.7, 22.3, 37],
  [518.3, 623.3, 22.3, 37],
  [854.3, 379.3, 22.3, 37],
  [919.7, 379.3, 22.3, 37],
  [1064.7, 379.3, 22.3, 37],
  ...rowPads.slice(1).map((x, i) => [x, MID, 21, i === 6 ? 32.5 : 35.7]),
  ...rowPads.map((x, i) => [x, LOW, 21, i === 6 ? 32.5 : 35.7]),
  [1619.7, 495.3, 26, 41],
  [1735.7, 495.3, 26, 41],
  [1619.7, 662.9, 26, 41],
  [1735.7, 662.9, 26, 41],
];
// [x, y, width, height, clearance]
const rects = [
  [766.3, 357, 44.7, 44.7, 12],
  [1108, 357, 44.7, 44.7, 12],
  [652, 461.7, 42, 42, 14.7],
  [496, 666.4, 44.7, 44.7, 14.7],
  [827.3, 537.7, 52.4, 44.5, 14.7],
  [930, 537.7, 52.4, 44.5, 14.7],
];
const holes = [
  ...discs.map(([x, y, r]) => [x, y, r === 26 ? 14.3 : r === 21 ? 10.3 : 13]),
  [788.7, 379.3, 13],
  [1130.3, 379.3, 13],
  [673, MID, 10.3],
  [518.3, 688.7, 13],
];
// pockets the pour cannot reach
const voids = [
  'M673 465L636 470L700 425L763 425V411H812V360L860 345H1087.7V452L1098 467V482Z',
  'M673 465H1523V500.5H673Z',
  'M673 661.7H1523V696.3H673Z',
  'M673 500H877V525L860 560H720L673 513Z',
  'M928.5 516H943V525H928.5Z',
  'M500.5 492H530V557H500.5ZM498.5 557H537.5V623H498.5ZM492 623H518V689H492Z',
  'M518 623H617L673 679L738 679L701 717H655L627 689H518Z',
  'M1766 471H1774V520H1766ZM1766 638H1774V688H1766Z',
];
const spokes = [
  'M788.7 379V340M788.7 379.3H748',
  'M1130.3 379.3H1170M1130.3 379.3V418',
  'M518.3 492V455M518.3 492.3H480',
  `M${rowPads[7]} 445V520`,
  `M${rowPads[6]} 641V717`,
];

function Copper() {
  return (
    <>
      <mask id="pour">
        <path d="M470 424.5L602.5 292.3H1634.5L1771.5 425V754.5Q1771.5 756.8 1769 756.8H472.5Q470 756.8 470 754.5Z" fill="#fff" />
        <g fill="none" stroke="#000" strokeLinejoin="round" strokeLinecap="round">
          {thick.map((d) => <path key={d} d={d} strokeWidth="45.5" />)}
          {thin.map((d) => <path key={d} d={d} strokeWidth="39.5" />)}
        </g>
        {voids.map((d) => <path key={d} d={d} fill="#000" />)}
        {discs.map(([x, y, , c]) => <circle key={`${x}-${y}`} cx={x} cy={y} r={c} fill="#000" />)}
        {rects.map(([x, y, w, h, c]) => (
          <rect key={`${x}-${y}`} x={x - c} y={y - c} width={w + 2 * c} height={h + 2 * c} rx={c} fill="#000" />
        ))}
      </mask>
      <g opacity="0.75">
        <rect x="465" y="285" width="1315" height="480" fill="#f00" mask="url(#pour)" />
        <g fill="none" stroke="#f00" strokeLinejoin="round">
          {thick.map((d) => <path key={d} d={d} strokeWidth="16.5" />)}
          {thin.map((d) => <path key={d} d={d} strokeWidth="10" />)}
          {spokes.map((d) => <path key={d} d={d} strokeWidth="14" />)}
        </g>
        {discs.map(([x, y, r]) => <circle key={`${x}-${y}`} cx={x} cy={y} r={r} fill="#f00" />)}
        {rects.map(([x, y, w, h]) => <rect key={`${x}-${y}`} x={x} y={y} width={w} height={h} fill="#f00" />)}
      </g>
      {holes.map(([x, y, r]) => <circle key={`${x}-${y}`} cx={x} cy={y} r={r} fill="none" stroke="#8f0000" />)}
    </>
  );
}

function Outlines() {
  return (
    <g fill="none">
      <path d="M454 418L595 276.5H1639.5L1787 417.5V772.7H454Z" stroke="#0000c0" strokeWidth="2.2" />
      <path
        d="M432.5 420Q432.5 410 438 404L581 261Q587 255.5 594 255.5H1640Q1648 255.5 1653 260L1803 402.5Q1808.5 408 1808.5 415V773Q1808.5 793.5 1788 793.5H453Q432.5 793.5 432.5 773Z"
        stroke="#e00000"
      />
      <path d="M432.5 497V547M1808.5 497V546" stroke="#1a8a8a" />
    </g>
  );
}

function Axes() {
  return (
    <g>
      <path d="M405 71V977.5H1835M400 72H1835" stroke="#8c8c8c" strokeWidth="1.5" fill="none" />
      <g stroke="#c0c0c0" shapeRendering="crispEdges">
        {range(-6.6, 28.2, 0.6).map((v) => <path key={v} d={`M400 ${py(v)}H404`} strokeWidth="1.5" />)}
        {range(-6, 27, 3).map((v) => <path key={v} d={`M395 ${py(v)}H404`} strokeWidth="2" />)}
        {range(0, 55, 0.5).map((v) => <path key={v} d={`M${px(v)} 979V983`} strokeWidth="1.5" />)}
        {range(0, 55, 2.5).map((v) => <path key={v} d={`M${px(v)} 979V988`} strokeWidth="2" />)}
      </g>
      <g fill="#686868" fontSize="9" fontFamily="Open Sans, sans-serif" textAnchor="middle">
        {range(-6, 27, 3).map((v) => <text key={v} x="385" y={py(v) + 3}>{v}</text>)}
        {range(0, 52.5, 2.5).map((v) => <text key={v} x={px(v)} y="1000">{v}</text>)}
        <text x="1834" y="1000" textAnchor="end">55</text>
      </g>
    </g>
  );
}

const hud = [
  ['Dx:', '14.0000 [mm]', 438, 102],
  ['Dy:', '-3.0000 [mm]', 438, 112],
  ['X:', '-2.0000 [mm]', 437, 133],
  ['Y:', '12.0000 [mm]', 437, 143],
];

function PlotCanvas() {
  return (
    <svg viewBox="350 71 1485 937" preserveAspectRatio="xMinYMin slice" className="block h-full w-full bg-black" role="img" aria-label="Plot area">
      <g shapeRendering="crispEdges">
        {range(1, 55, 1).map((v) => <path key={v} d={`M${px(v)} 73V976`} stroke={v % 10 ? '#222' : '#777'} />)}
        {range(-6, 28, 1).map((v) => <path key={v} d={`M407 ${py(v)}H1834`} stroke={v % 10 ? '#222' : '#777'} />)}
      </g>
      <rect x="410" y="76" width="176" height="88" rx="4" fill="#fff" fillOpacity="0.13" stroke="#383838" />
      <Copper />
      <Outlines />
      <path d={`M${px(0)} 73V976M407 ${py(0)}H1834`} stroke="#b05454" strokeWidth="1.6" />
      <Axes />
      <g fill="#d8d8d8" fontSize="9" fontFamily="Open Sans, sans-serif">
        {hud.map(([k, v, x, y]) => (
          <g key={k}>
            <text x="415" y={y}>{k}</text>
            <text x={x} y={y}>{v}</text>
          </g>
        ))}
      </g>
    </svg>
  );
}

// hand-drawn marks that lie over the panel and the plot
function Annotations() {
  return (
    <svg viewBox="300 590 140 300" className="pointer-events-none absolute top-[590px] left-[300px] h-[300px] w-[140px]" fill="none" stroke="#ed1c24" strokeWidth="5" strokeLinejoin="round" aria-hidden="true">
      <path d="M335 639.5L379 628V633.5H422.5V645.5H379V651Z" />
      <path d="M323 865.5L362 853.5V859H401V871.500H362V877.5Z" />
      <g fill="#ed1c24" stroke="none" fontSize="26" fontWeight="bold" fontStyle="italic" fontFamily="Liberation Sans, sans-serif">
        <text x="396" y="619">1</text>
        <text x="377" y="851">2</text>
      </g>
    </svg>
  );
}

/* ---------- window frame ---------- */

const menus = ['File', 'Edit', 'Options', 'View', 'Objects', 'Tool', 'Help'];

function TitleBar() {
  return (
    <header className={clsx('flex h-[23px] shrink-0 items-center bg-white text-[11px]', UI_FONT)}>
      <FlatcamIcon className="mr-1.5 ml-[3px] size-3.5" />
      <span className="whitespace-pre">FlatCAM 8.994 BETA - 64bit - [3D]     New Project - Not saved</span>
      <div className="mr-0.5 ml-auto flex">
        {[
          ['Minimize', 'M1 6.5h10'],
          ['Restore', 'M1.5 3.5h7v7h-7zM3.5 3.5v-2h7v7h-2'],
          ['Close', 'M1 1l10 10M11 1L1 11'],
        ].map(([name, d]) => (
          <button key={name} type="button" aria-label={name} className="flex w-[46px] justify-center">
            <svg viewBox="0 0 12 12" className="size-3" fill="none" stroke="#000"><path d={d} /></svg>
          </button>
        ))}
      </div>
    </header>
  );
}

function MenuBar() {
  return (
    <nav className={clsx('flex h-[21px] shrink-0 items-center border-b border-[#d8d8d8] pl-3 text-[11px]', UI_FONT)}>
      <svg viewBox="0 0 12 12" className="mr-2.5 size-3" aria-hidden="true">
        <path d="M.5.5h11v11H.5z" fill="#fff" stroke="#222" />
        <path d="M0 0h7v12H0z" />
      </svg>
      {menus.map((m) => (
        <button key={m} type="button" className="pr-2 pl-[7px]">{m}</button>
      ))}
    </nav>
  );
}

function StatusBar() {
  return (
    <footer className={clsx('flex h-7 shrink-0 items-center pl-[7px] text-xs', PANEL_FONT)}>
      <span className="size-3 rounded-full border border-black bg-[#0c2]" />
      <span className="ml-[9px] flex-1">Any-form Cutout operation finished.</span>
      <div className="flex items-center pr-[150px]">
        <span><b>X:</b> -2.0000</span>
        <span className="mx-2"><b>Y:</b> 12.0000</span>
        <button type="button" aria-label="Snap to grid" className="ml-1 grid size-5 place-items-center bg-[#d4d4d4]">
          <svg viewBox="0 0 16 16" className="size-4" fill="none" stroke="#222">
            <path d="M1 1h14v14H1z" strokeWidth="1.6" />
            <path d="M4.5 1v14M8 1v14M11.5 1v14M1 4.5h14M1 8h14M1 11.5h14" stroke="#777" strokeDasharray="1 1" />
            <path d="M10 8h4M12 6v4" strokeWidth="1.5" />
          </svg>
        </button>
        <input aria-label="Grid X" defaultValue="1.0" className="ml-0.5 h-[22px] w-[70px] rounded-xs border border-[#adadad] bg-white px-0.5 text-[11px]" />
        <span className="mx-[5px] flex"><Check id="gridlink" label="Link grid" checked /></span>
        <input aria-label="Grid Y" defaultValue="1.0" disabled className="h-[22px] w-[70px] rounded-xs border border-[#adadad] bg-[#f0f0f0] px-0.5 text-[11px] text-neutral-500" />
        <button type="button" aria-label="Axis" className="ml-2.5 grid h-[22px] w-4 place-items-center bg-[#ffa500]">
          <svg viewBox="0 0 16 20" className="h-5 w-4" fill="none" stroke="#222">
            <path d="M2.5 7v10.5H14M2.5 17.5L11 8" />
            <path d="M1.5 2l1.5 2 1.5-2M3 4v2M9.5 4.5h3l-3 3h3M12 12.5l3 3M15 12.5l-3 3" strokeWidth=".8" />
          </svg>
        </button>
        <button type="button" aria-label="Preferences" className="ml-[5px]">
          <svg viewBox="0 0 24 24" className="size-[18px]" fill="none" stroke="#333" strokeWidth="1.5">
            <path d="M10 2h4l.6 2.6 2 .9L19 4.2 21 7l-1.4 2.2.6 2.2L23 12.5l-1 3.5-2.6.3-1.4 1.7.3 2.7L15 22l-1.8-2h-2.4L9 22l-3.300-1.300.3-2.700-1.400-1.700L2 16l-1-3.500 2.800-1.100.6-2.200L3 7l2-2.800 2.400 1.300 2-.9z" />
            <circle cx="12" cy="12" r="4" />
          </svg>
        </button>
        <button type="button" aria-label="Shell" className="ml-1.5"><TerminalIcon className="size-[18px]" /></button>
        <button type="button" aria-label="HUD" className="ml-[5px] grid h-[22px] w-4 place-items-center bg-[#9370db]">
          <svg viewBox="0 0 14 14" className="size-3.5" fill="none" stroke="#111">
            <rect x="1" y="1" width="12" height="12" rx="2" />
            <path d="M4.5 3.5v7M9.5 3.5v7M4.5 7h5" strokeWidth="1.6" />
          </svg>
        </button>
        <span className="ml-1.5">A4</span>
        <span className="ml-3.5">[mm]</span>
        <span className="ml-4 size-3 rounded-full border border-[#1a8a1a] bg-radial-[at_50%_20%] from-[#9fe89f] to-[#22a822] to-40%" />
        <span className="ml-2">Idle.</span>
      </div>
    </footer>
  );
}

export default function App() {
  return (
    <div className="relative flex h-screen flex-col overflow-hidden bg-[#f0f0f0] text-black">
      <TitleBar />
      <MenuBar />
      <div className="flex min-h-0 flex-1">
        <Toolbar className="w-10" items={leftTools}>
          <svg viewBox="0 0 8 10" className="mx-auto mt-auto mb-1 h-2.5 w-2 shrink-0" fill="none" stroke="#333" aria-hidden="true">
            <path d="M1 1l3 3 3-3M1 6l3 3 3-3" />
          </svg>
        </Toolbar>
        <div className="flex min-w-0 flex-1 pb-0.5">
          <SidePanel />
          <div className="flex w-1 shrink-0 items-center justify-center">
            <div className="h-4 w-0.5 border-x border-dotted border-neutral-400" />
          </div>
          <main className="flex min-w-0 flex-1 flex-col">
            <div className={clsx('flex h-[23px] shrink-0 text-[11px]', PANEL_FONT)}>
              <button type="button" className="w-[68px] rounded-t-xs border border-b-0 border-[#b4b4b4] bg-white pt-0.5">Plot Area</button>
            </div>
            <div className="min-h-0 flex-1 border border-[#b4b4b4] bg-white px-[3px] pt-[3px] pb-px">
              <PlotCanvas />
            </div>
          </main>
        </div>
        <Toolbar className="ml-0.5 w-[39px] border-l text-[#5a5a5a]" items={editTools} />
        <Toolbar className="w-[41px] border-r-0 text-[#5a5a5a]" items={geoTools} />
      </div>
      <StatusBar />
      <Annotations />
    </div>
  );
}
